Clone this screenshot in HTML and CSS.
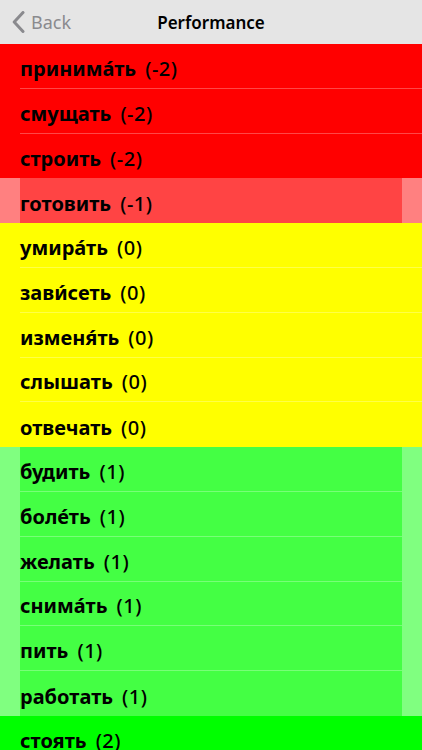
FILE: index.html
```html
<!DOCTYPE html>
<html>
<head>
<meta charset="utf-8">
<link rel="stylesheet" href="styles.css">
</head>
<body>
<div class="nav">
  <div class="back">
    <svg class="chev" width="13" height="22" viewBox="0 0 13 22"><path d="M11 1.5 L2.2 11 L11 20.5" fill="none" stroke="#8a8a8e" stroke-width="3" stroke-linecap="round" stroke-linejoin="round"/></svg>
    <span>Back</span>
  </div>
  <div class="title">Performance</div>
</div>
<div class="list">
  <div class="row m2"><div class="cell"><span class="w">принима́ть</span><span class="n">(-2)</span></div></div>
  <div class="row m2"><div class="cell"><span class="w">смущать</span><span class="n">(-2)</span></div></div>
  <div class="row m2"><div class="cell last"><span class="w">строить</span><span class="n">(-2)</span></div></div>
  <div class="row m1"><div class="cell last"><span class="w">готовить</span><span class="n">(-1)</span></div></div>
  <div class="row z"><div class="cell"><span class="w">умира́ть</span><span class="n">(0)</span></div></div>
  <div class="row z"><div class="cell"><span class="w">зави́сеть</span><span class="n">(0)</span></div></div>
  <div class="row z"><div class="cell"><span class="w">изменя́ть</span><span class="n">(0)</span></div></div>
  <div class="row z"><div class="cell"><span class="w">слышать</span><span class="n">(0)</span></div></div>
  <div class="row z"><div class="cell last"><span class="w">отвечать</span><span class="n">(0)</span></div></div>
  <div class="row p1"><div class="cell"><span class="w">будить</span><span class="n">(1)</span></div></div>
  <div class="row p1"><div class="cell"><span class="w">боле́ть</span><span class="n">(1)</span></div></div>
  <div class="row p1"><div class="cell"><span class="w">желать</span><span class="n">(1)</span></div></div>
  <div class="row p1"><div class="cell"><span class="w">снима́ть</span><span class="n">(1)</span></div></div>
  <div class="row p1"><div class="cell"><span class="w">пить</span><span class="n">(1)</span></div></div>
  <div class="row p1"><div class="cell last"><span class="w">работать</span><span class="n">(1)</span></div></div>
  <div class="row p2"><div class="cell"><span class="w">стоять</span><span class="n">(2)</span></div></div>
</div>
</body>
</html>
```
FILE: styles.css
```css
html, body { margin: 0; padding: 0; }
body {
  width: 422px;
  height: 750px;
  overflow: hidden;
  background: #fff;
  font-family: "Noto Sans", "Noto Sans CJK SC", sans-serif;
}
.nav {
  height: 44px;
  background: #e5e5e5;
  display: flex;
  align-items: center;
  justify-content: center;
  position: relative;
}
.back {
  position: absolute;
  left: 12px;
  top: 0;
  height: 44px;
  display: flex;
  align-items: center;
  gap: 6px;
  color: #8a8a8e;
  font-size: 18px;
  font-family: "Noto Sans", sans-serif;
}
.back span { margin-top: -1px; }
.title {
  font-size: 17px;
  font-weight: 600;
  color: #000;
}
.list { display: flex; flex-direction: column; }
.row {
  height: 44.8px;
  display: flex;
  flex-shrink: 0;
}
.cell {
  flex: 1;
  margin-left: 20px;
  display: flex;
  align-items: center;
  color: #000;
  border-bottom: 1px solid rgba(255,255,255,0.28);
  box-sizing: border-box;
  padding-top: 5px;
}
.cell.last { border-bottom: none; }
.w {
  font-size: 20px;
  font-weight: 700;
}
.n {
  font-size: 20px;
  font-weight: 500;
  margin-left: 9px;
  letter-spacing: 0.5px;
}
.m2 { background: #ff0000; }
.m1 { background: #ff8080; }
.m1 .cell { background: #ff4444; margin-right: 20px; }
.z { background: #ffff00; }
.p1 { background: #80ff80; }
.p1 .cell { background: #44ff44; margin-right: 20px; }
.p2 { background: #00ff00; }
```
